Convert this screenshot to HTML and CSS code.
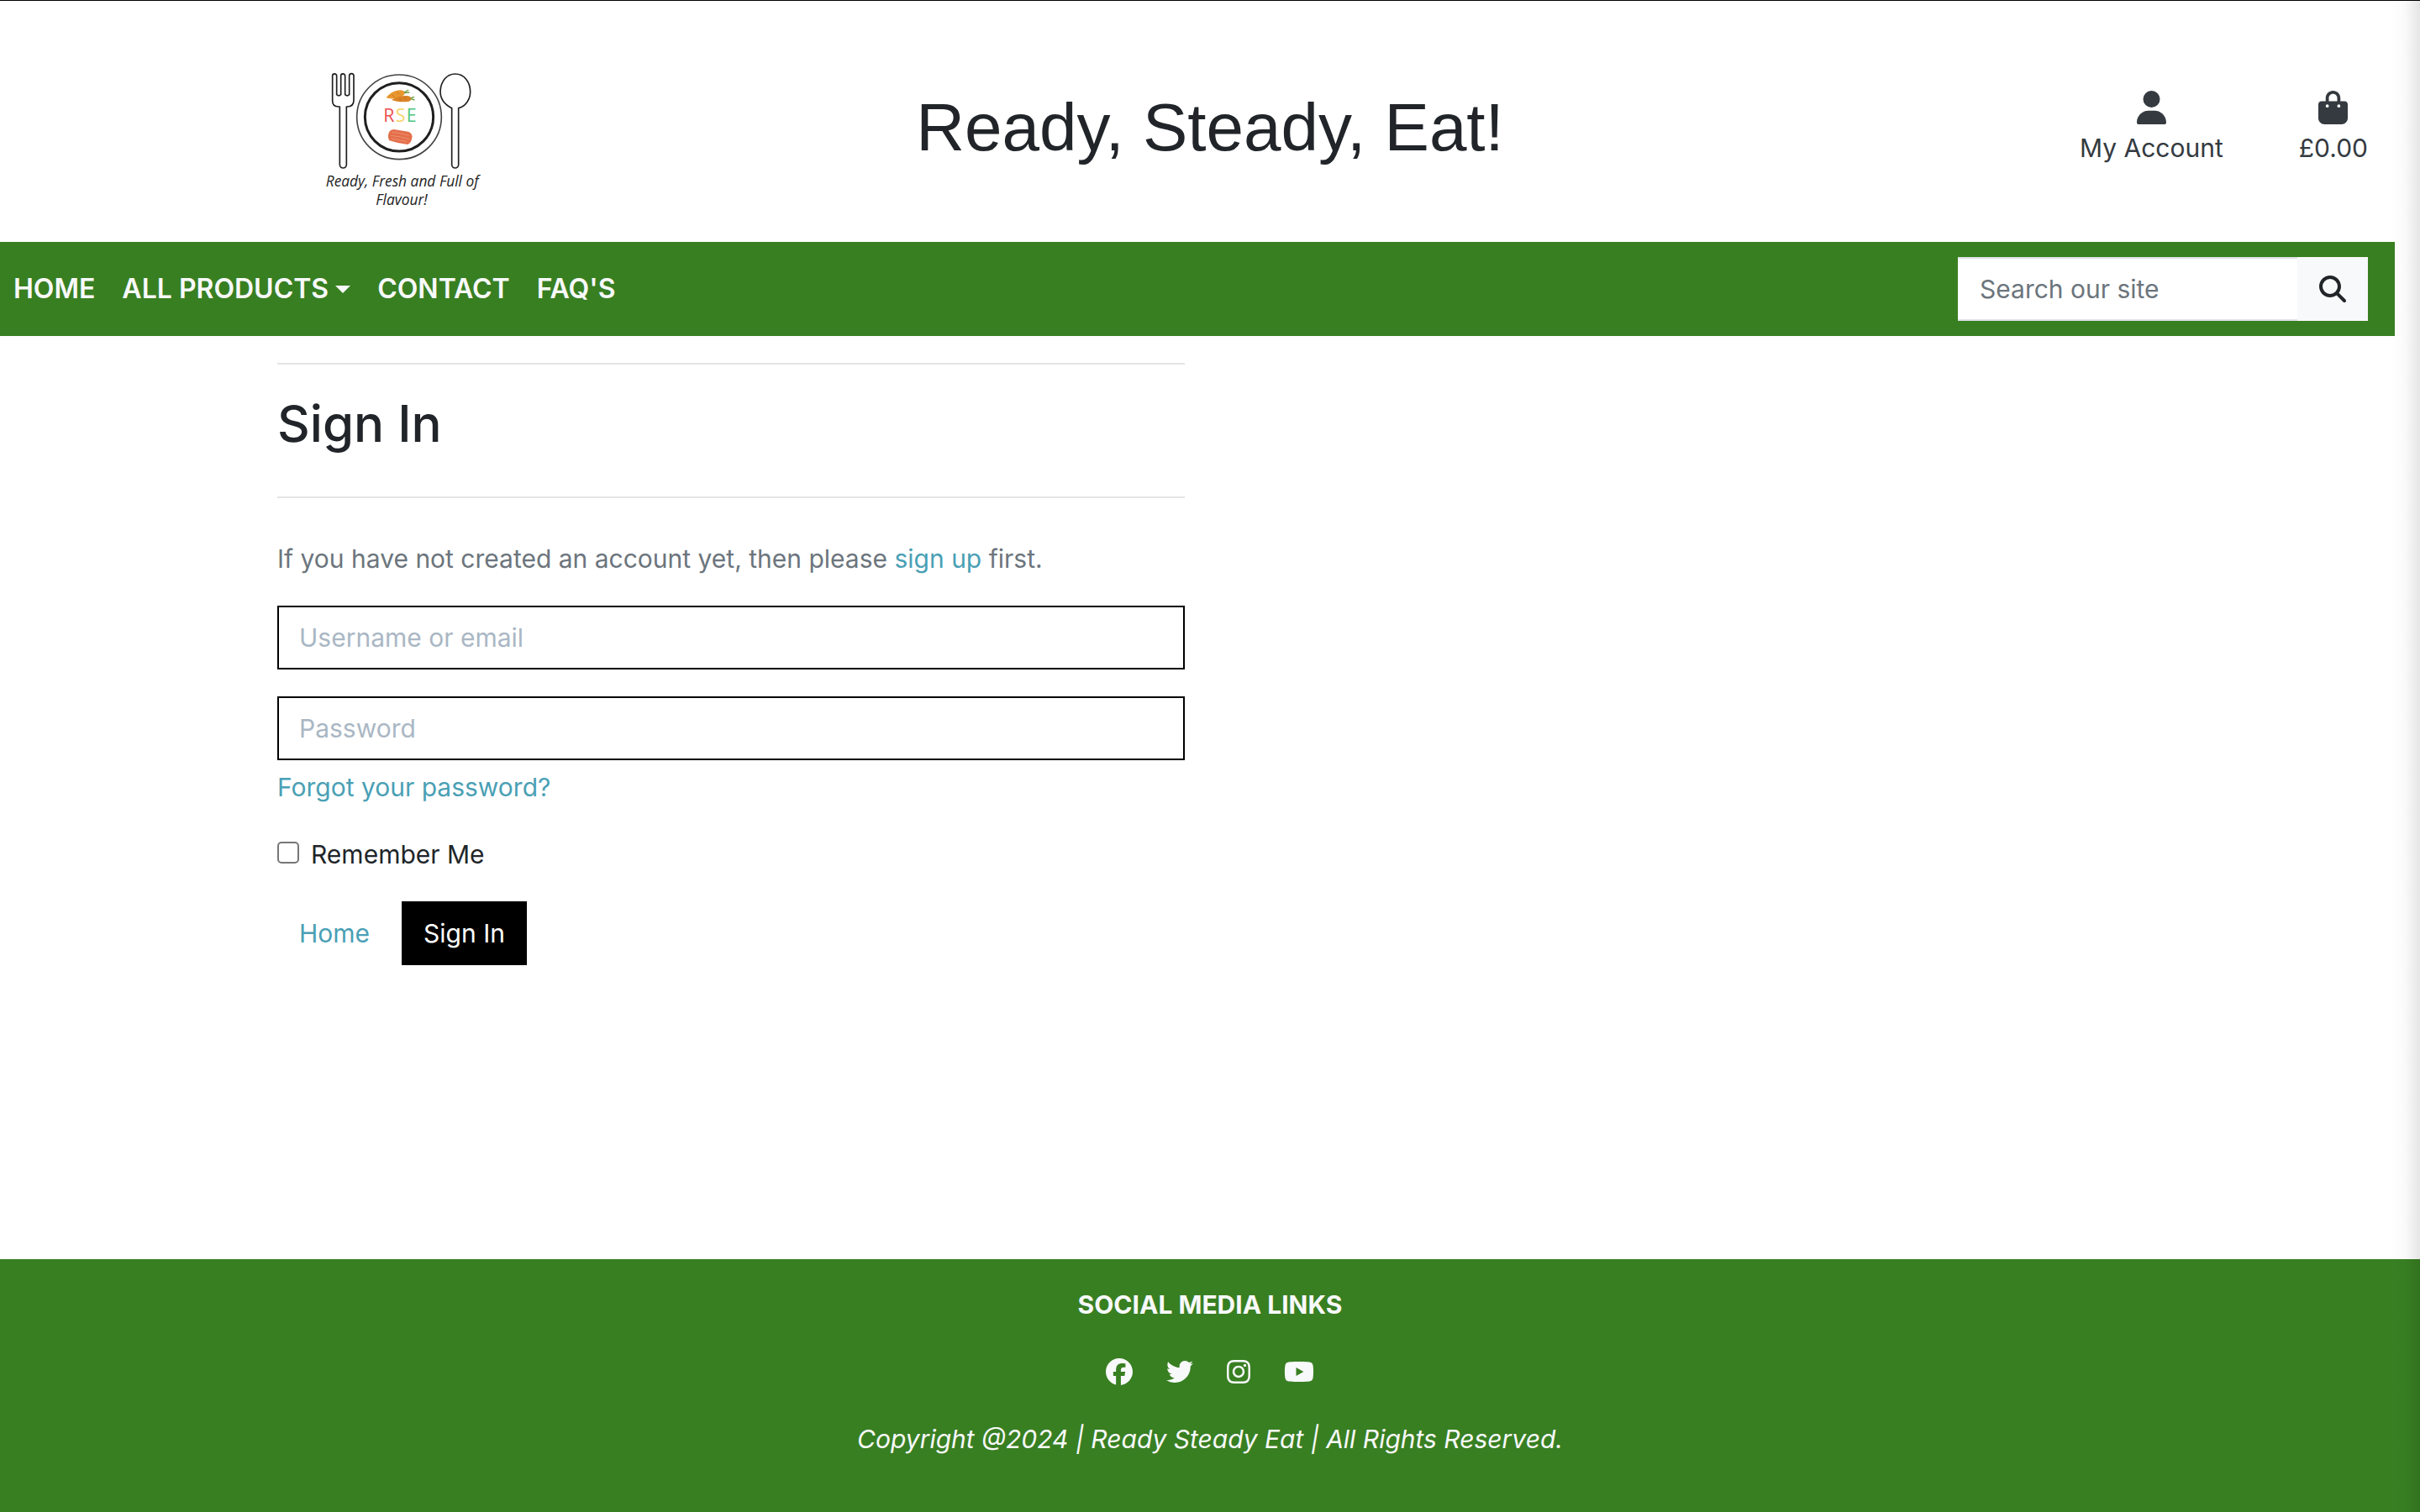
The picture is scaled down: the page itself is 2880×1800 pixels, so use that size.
FILE: index.html
```
<!DOCTYPE html>
<html lang="en">
<head>
<meta charset="utf-8">
<meta name="viewport" content="width=device-width, initial-scale=1">
<title>Ready, Steady, Eat! - Sign In</title>
<link rel="stylesheet" href="styles.css">
</head>
<body>
<header class="site-header">
  <a class="logo" href="#" aria-label="Ready, Steady, Eat! home">
    <svg class="logo-art" viewBox="0 -48 720 648" aria-hidden="true">
      <g fill="none" stroke="#1f1f1f" stroke-width="5" stroke-linejoin="round">
        <path d="M107 180V91a7 7 0 0 1 15 0V158a11 11 0 0 0 15 0V91a7 7 0 0 1 15 0V158a11 11 0 0 0 15 0V91a8 8 0 0 1 16 0V178Q183 201 160 201H157V408a12 12 0 0 1-24 0V201H128Q107 201 107 180Z"/>
        <path d="M533 206C505 192 492 170 492 146C494 110 515 84 545 84C577 84 599 112 599 148C599 176 582 200 557 206V408a12 12 0 0 1-24 0Z"/>
        <circle cx="345" cy="238" r="151" stroke="#444"/>
        <circle cx="345" cy="238" r="122" stroke-width="9"/>
      </g>
      <path d="M299 169C312 153 328 142 350 142C364 143 368 151 363 158C350 170 319 177 299 169Z" fill="#e8962e"/>
      <path d="M318 177C336 166 359 160 378 163C391 167 391 177 381 182C361 186 337 184 318 177Z" fill="#d98326"/>
      <path d="M321 160l8 6M338 150l5 7M347 171l3 8M366 166l2 8" fill="none" stroke="#b9651c" stroke-width="2"/>
      <path d="M363 150l16-9M364 152l18-2M387 170l12-4M387 173l13 4" fill="none" stroke="#6d9a3c" stroke-width="4"/>
      <path d="M306 312Q304 284 326 282L377 290Q393 295 391 312Q388 332 375 336Q340 332 310 322Z" fill="#e46f4b"/>
      <path d="M320 292q28 2 60 12M316 304q34 4 66 13M318 316q28 3 54 10" fill="none" stroke="#ef906f" stroke-width="3"/>
      <g class="logo-letters">
        <text x="289" y="255" fill="#ec4f4f">R</text>
        <text x="332" y="255" fill="#f7d56a">S</text>
        <text x="371" y="255" fill="#4fc57b">E</text>
      </g>
      <g class="logo-tagline">
        <text x="356" y="487">Ready, Fresh and Full of</text>
        <text x="354" y="552">Flavour!</text>
      </g>
    </svg>
  </a>
  <h1 class="site-title">Ready, Steady, Eat!</h1>
  <div class="header-links">
    <a class="header-link" href="#">
      <svg class="header-icon" viewBox="0 0 448 512" aria-hidden="true"><path d="M224 256A128 128 0 1 0 224 0a128 128 0 1 0 0 256zm-45.700 48C79.800 304 0 383.800 0 482.300C0 498.700 13.300 512 29.700 512H418.300c16.400 0 29.700-13.300 29.700-29.700C448 383.800 368.200 304 269.700 304H178.300z"/></svg>
      <span>My Account</span>
    </a>
    <a class="header-link" href="#">
      <svg class="header-icon" viewBox="0 0 448 512" aria-hidden="true"><path d="M160 112c0-35.300 28.700-64 64-64s64 28.700 64 64v48H160V112zm-48 48H48c-26.500 0-48 21.500-48 48V416c0 53 43 96 96 96H352c53 0 96-43 96-96V208c0-26.500-21.500-48-48-48H336V112C336 50.100 285.900 0 224 0S112 50.100 112 112v48zm24 48a24 24 0 1 1 0 48 24 24 0 1 1 0-48zm152 24a24 24 0 1 1 48 0 24 24 0 1 1 -48 0z"/></svg>
      <span>£0.00</span>
    </a>
  </div>
</header>

<nav class="navbar" aria-label="Main">
  <ul class="nav-list">
    <li><a class="nav-link" href="#">HOME</a></li>
    <li><a class="nav-link has-menu" href="#">ALL PRODUCTS</a></li>
    <li><a class="nav-link" href="#">CONTACT</a></li>
    <li><a class="nav-link" href="#">FAQ'S</a></li>
  </ul>
  <form class="search" role="search">
    <input class="search-input" type="text" placeholder="Search our site" aria-label="Search our site">
    <button class="search-button" type="submit" aria-label="Search">
      <svg class="search-icon" viewBox="0 0 512 512" aria-hidden="true"><path d="M416 208c0 45.900-14.900 88.300-40 122.700L502.600 457.400c12.500 12.500 12.500 32.800 0 45.300s-32.800 12.500-45.300 0L330.700 376c-34.400 25.200-76.800 40-122.700 40C93.100 416 0 322.900 0 208S93.100 0 208 0S416 93.100 416 208zM208 352a144 144 0 1 0 0-288 144 144 0 1 0 0 288z"/></svg>
    </button>
  </form>
</nav>

<main class="content">
  <section class="signin">
    <hr class="rule">
    <h2 class="signin-title">Sign In</h2>
    <hr class="rule">
    <p class="signin-intro">If you have not created an account yet, then please <a href="#">sign up</a> first.</p>
    <form class="signin-form">
      <input class="field" type="text" placeholder="Username or email" aria-label="Username or email">
      <div class="password-group">
        <input class="field" type="password" placeholder="Password" aria-label="Password">
        <a href="#">Forgot your password?</a>
      </div>
      <div class="remember">
        <input class="remember-box" type="checkbox" id="remember">
        <label for="remember">Remember Me</label>
      </div>
      <div class="actions">
        <a class="button" href="#">Home</a>
        <button class="button button-dark" type="submit">Sign In</button>
      </div>
    </form>
  </section>
</main>

<footer class="site-footer">
  <h2 class="footer-title">SOCIAL MEDIA LINKS</h2>
  <div class="social">
    <a href="#" aria-label="Facebook"><svg class="social-icon" viewBox="0 0 512 512"><path d="M512 256C512 114.600 397.400 0 256 0S0 114.600 0 256C0 376 82.700 476.800 194.200 504.500V334.200H141.400V256h52.800V222.300c0-87.100 39.400-127.500 125-127.500c16.200 0 44.200 3.200 55.700 6.400V172c-6-.6-16.500-1-29.600-1c-42 0-58.200 15.900-58.200 57.200V256h83.600l-14.400 78.200H287V510.100C413.800 494.800 512 386.900 512 256h0z"/></svg></a>
    <a href="#" aria-label="Twitter"><svg class="social-icon" viewBox="0 0 512 512"><path d="M459.370 151.716c.325 4.548.325 9.097.325 13.645 0 138.720-105.583 298.558-298.558 298.558-59.452 0-114.680-17.219-161.137-47.106 8.447.974 16.568 1.299 25.340 1.299 49.055 0 94.213-16.568 130.274-44.832-46.132-.975-84.792-31.188-98.112-72.772 6.498.974 12.995 1.624 19.818 1.624 9.421 0 18.843-1.300 27.614-3.573-48.081-9.747-84.143-51.980-84.143-102.985v-1.299c13.969 7.797 30.214 12.670 47.431 13.319-28.264-18.843-46.781-51.005-46.781-87.391 0-19.492 5.197-37.360 14.294-52.954 51.655 63.675 129.300 105.258 216.365 109.807-1.624-7.797-2.599-15.918-2.599-24.040 0-57.828 46.782-104.934 104.934-104.934 30.213 0 57.502 12.670 76.670 33.137 23.715-4.548 46.456-13.320 66.599-25.340-7.798 24.366-24.366 44.833-46.132 57.827 21.117-2.273 41.584-8.122 60.426-16.243-14.292 20.791-32.161 39.308-52.628 54.253z"/></svg></a>
    <a href="#" aria-label="Instagram"><svg class="social-icon" viewBox="0 0 448 512"><path d="M224.100 141c-63.600 0-114.900 51.300-114.900 114.900s51.300 114.900 114.900 114.900S339 319.500 339 255.900 287.700 141 224.100 141zm0 189.600c-41.100 0-74.700-33.500-74.700-74.700s33.500-74.700 74.700-74.700 74.700 33.500 74.700 74.700-33.600 74.700-74.700 74.700zm146.400-194.300c0 14.900-12 26.800-26.800 26.800-14.900 0-26.800-12-26.800-26.800s12-26.800 26.800-26.800 26.800 12 26.800 26.800zm76.100 27.200c-1.700-35.900-9.900-67.700-36.200-93.900-26.200-26.200-58-34.400-93.900-36.200-37-2.100-147.900-2.100-184.900 0-35.800 1.700-67.600 9.900-93.900 36.100s-34.400 58-36.200 93.900c-2.100 37-2.100 147.900 0 184.900 1.700 35.900 9.900 67.700 36.200 93.900s58 34.400 93.900 36.200c37 2.100 147.900 2.100 184.900 0 35.900-1.700 67.700-9.900 93.900-36.200 26.200-26.200 34.400-58 36.200-93.900 2.100-37 2.100-147.800 0-184.800zM398.800 388c-7.800 19.600-22.900 34.700-42.600 42.600-29.500 11.700-99.500 9-132.100 9s-102.700 2.600-132.100-9c-19.600-7.800-34.700-22.900-42.600-42.600-11.700-29.500-9-99.500-9-132.100s-2.600-102.700 9-132.100c7.800-19.600 22.900-34.700 42.600-42.600 29.500-11.700 99.500-9 132.100-9s102.700-2.600 132.100 9c19.600 7.800 34.700 22.900 42.600 42.600 11.700 29.500 9 99.500 9 132.100s2.700 102.700-9 132.100z"/></svg></a>
    <a href="#" aria-label="YouTube"><svg class="social-icon" viewBox="0 0 576 512"><path d="M549.655 124.083c-6.281-23.650-24.787-42.276-48.284-48.597C458.781 64 288 64 288 64S117.220 64 74.629 75.486c-23.497 6.322-42.003 24.947-48.284 48.597-11.412 42.867-11.412 132.305-11.412 132.305s0 89.438 11.412 132.305c6.281 23.650 24.787 41.500 48.284 47.821C117.220 448 288 448 288 448s170.780 0 213.371-11.486c23.497-6.321 42.003-24.171 48.284-47.821 11.412-42.867 11.412-132.305 11.412-132.305s0-89.438-11.412-132.305zm-317.510 213.508V175.185l142.739 81.205-142.739 81.201z"/></svg></a>
  </div>
  <p class="copyright">Copyright @2024 | Ready Steady Eat | All Rights Reserved.</p>
</footer>
<div class="edge-shadow" aria-hidden="true"></div>
</body>
</html>
```

FILE: styles.css
```
*,
*::before,
*::after {
  box-sizing: border-box;
}

:root {
  --green: #387f22;
  --light: #f8f9fa;
  --ink: #212529;
  --link: #4aa0b5;
}

body {
  margin: 0;
  min-height: 100vh;
  display: flex;
  flex-direction: column;
  position: relative;
  border-top: 1px solid #000;
  background: #fff;
  color: var(--ink);
  font: 400 30px/48px Inter, "Liberation Sans", sans-serif;
}

h1,
h2,
p,
ul {
  margin: 0;
  padding: 0;
}

a {
  color: var(--link);
  text-decoration: none;
}

input,
button {
  font: inherit;
  border-radius: 0;
  margin: 0;
}

svg {
  display: block;
  fill: currentColor;
}

/* Header */
.site-header {
  display: grid;
  grid-template-columns: repeat(3, 1fr);
  align-items: center;
  padding: 43px 0 28px;
}

.logo {
  justify-self: center;
}

.logo-art {
  width: 240px;
  height: 216px;
}

.logo-letters {
  font: 400 64px "Open Sans", sans-serif;
}

.logo-tagline {
  font: italic 400 52px "Open Sans", sans-serif;
  fill: #222;
  text-anchor: middle;
}

.site-title {
  font: 400 80px/96px "Liberation Sans", Arial, sans-serif;
  text-align: center;
}

.header-links {
  display: flex;
  justify-content: flex-end;
  gap: 90px;
  padding: 4px 62px 0 0;
}

.header-link {
  display: flex;
  flex-direction: column;
  align-items: center;
  gap: 4px;
  color: #343a40;
}

.header-icon {
  height: 40px;
}

/* Navigation */
.navbar {
  display: flex;
  align-items: center;
  justify-content: space-between;
  margin-right: 30px;
  padding: 18px 32px 18px 16px;
  background: var(--green);
}

.nav-list {
  display: flex;
  gap: 32px;
  list-style: none;
}

.nav-link {
  display: flex;
  align-items: center;
  gap: 8px;
  color: var(--light);
  font-size: 32px;
  font-weight: 600;
}

.has-menu::after {
  content: "";
  border: 9px solid transparent;
  border-top-color: currentColor;
  border-bottom: 0;
}

.search {
  display: flex;
  height: 76px;
}

.search-input {
  width: 404px;
  padding: 0 26px;
  border: solid #dee2e6;
  border-width: 2px 0;
  background: #fff;
  color: var(--ink);
}

.search-input::placeholder {
  color: #6c757d;
  opacity: 1;
}

.search-button {
  width: 84px;
  display: grid;
  place-items: center;
  padding: 0;
  border: 0;
  background: var(--light);
  color: var(--ink);
}

.search-icon {
  width: 32px;
}

/* Sign in */
.content {
  flex: 1;
  padding: 32px 330px;
}

.signin {
  max-width: 1080px;
}

.rule {
  height: 2px;
  margin: 0;
  border: 0;
  background: #e4e4e4;
}

.signin-title {
  padding: 32px 0 49px;
  font-size: 60px;
  font-weight: 500;
  line-height: 76px;
}

.signin-intro {
  margin: 48px 0 32px;
  color: #6c757d;
}

.signin-form {
  display: grid;
  gap: 32px;
}

.password-group {
  display: grid;
  justify-items: start;
  gap: 8px;
}

.field {
  width: 100%;
  height: 76px;
  padding: 0 24px;
  border: 2px solid #000;
  background: #fff;
  color: var(--ink);
}

.field::placeholder {
  color: #aab7c4;
  opacity: 1;
}

.remember {
  display: flex;
  align-items: center;
  gap: 14px;
}

.remember-box {
  appearance: none;
  width: 26px;
  height: 26px;
  margin-bottom: 4px;
  border: 2px solid #767676;
  border-radius: 5px;
  background: #fff;
}

.actions {
  display: flex;
  gap: 12px;
}

.button {
  padding: 12px 24px;
  border: 2px solid transparent;
}

.button-dark {
  border-color: #000;
  background: #000;
  color: #fff;
}

/* Footer */
.site-footer {
  display: flex;
  flex-direction: column;
  align-items: center;
  gap: 32px;
  padding: 30px 0 63px;
  background: var(--green);
  color: var(--light);
}

.footer-title {
  font-size: 30px;
  font-weight: 700;
  line-height: 48px;
}

.social {
  display: flex;
  align-items: center;
  gap: 40px;
  height: 48px;
}

.social a {
  color: inherit;
}

.social-icon {
  height: 32px;
}

.copyright {
  font-style: italic;
}

/* Soft shade along the right edge of the window */
.edge-shadow {
  position: absolute;
  top: 0;
  right: 0;
  bottom: 0;
  width: 36px;
  background: linear-gradient(to right, rgba(0, 0, 0, 0), rgba(0, 0, 0, 0.02) 50%, rgba(0, 0, 0, 0.1));
  pointer-events: none;
}
```
